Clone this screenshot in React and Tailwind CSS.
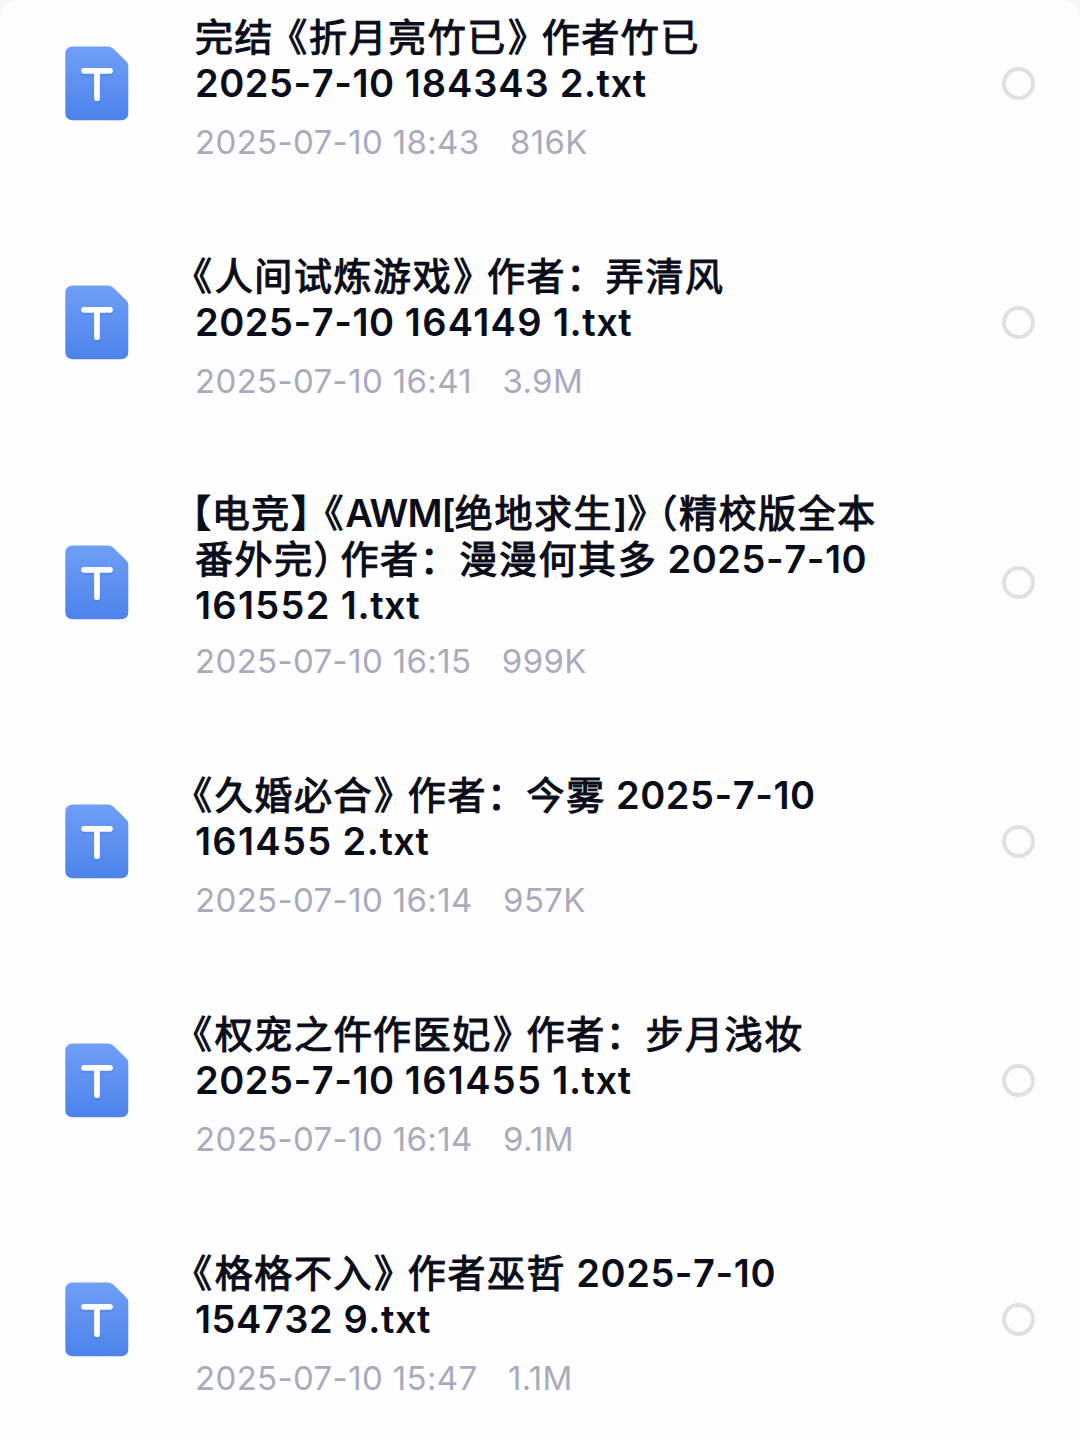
const files = [
  {
    lines: ["完结《折月亮竹已》作者竹已", "2025-7-10 184343 2.txt"],
    time: "2025-07-10 18:43",
    size: "816K",
  },
  {
    lines: ["《人间试炼游戏》作者：弄清风", "2025-7-10 164149 1.txt"],
    time: "2025-07-10 16:41",
    size: "3.9M",
  },
  {
    lines: ["【电竞】《AWM[绝地求生]》（精校版全本", "番外完）作者：漫漫何其多 2025-7-10", "161552 1.txt"],
    time: "2025-07-10 16:15",
    size: "999K",
  },
  {
    lines: ["《久婚必合》作者：今雾 2025-7-10", "161455 2.txt"],
    time: "2025-07-10 16:14",
    size: "957K",
  },
  {
    lines: ["《权宠之仵作医妃》作者：步月浅妆", "2025-7-10 161455 1.txt"],
    time: "2025-07-10 16:14",
    size: "9.1M",
  },
  {
    lines: ["《格格不入》作者巫哲 2025-7-10", "154732 9.txt"],
    time: "2025-07-10 15:47",
    size: "1.1M",
  },
];

// spacing around the half-width punctuation
const punctuation = {
  "《": "ml-[14px] first:-ml-[2px] first:mr-[1px]",
  "》": "ml-[1px] mr-[13px]",
  "【": "-ml-[3px] -mr-[1px]",
  "】": "-mr-[1px]",
  "（": "-ml-[3px]",
  "）": "mr-[6px]",
};

function runStyle(text) {
  if (text in punctuation) {
    return `tracking-[1.7px] font-normal [-webkit-text-stroke:1.1px] [font-feature-settings:'halt'] ${punctuation[text]}`;
  }
  if (/^[A-Z[\]]+$/.test(text)) return "tracking-[-0.9px]";
  if (/^16\d{4}$/.test(text)) return "tracking-[1.3px]";
  if (/^18\d{4}$/.test(text)) return "tracking-[0.9px]";
  if (/^[\x20-\x7e]+$/.test(text)) return "tracking-[0.55px] [font-kerning:none]";
  return "tracking-[1.6px] font-normal [-webkit-text-stroke:1.1px]";
}

function TitleLine({ text }) {
  const runs = text.match(/[《》【】（）]|\d{6}|[\x20-\x7e]+?(?=\d{6}|[^\x20-\x7e]|$)|[^\x20-\x7e《》【】（）]+/g);
  return (
    <span className="block whitespace-pre">
      {runs.map((run, i) => (
        <span key={i} className={runStyle(run)}>{run}</span>
      ))}
    </span>
  );
}

function TextFileIcon() {
  return (
    <svg viewBox="0 0 64 75" className="w-16 h-[75px] shrink-0">
      <defs>
        <linearGradient id="file" x1="0" y1="0" x2="0" y2="1">
          <stop offset="0" stopColor="#6f9ff6" />
          <stop offset="1" stopColor="#4c82ea" />
        </linearGradient>
      </defs>
      <path
        fill="url(#file)"
        d="M8 .5H42.500Q46 .5 48.200 2.600L61.200 15.200Q63.300 17.200 63.300 20.500V67Q63.300 74.300 56 74.300H8Q.3 74.300 .3 67V8Q.3 .5 8 .5Z"
      />
      <path
        d="M19 26.500H45M32 26.500V53.500"
        stroke="#3a6cd0"
        strokeOpacity=".3"
        strokeWidth="6.500"
        strokeLinecap="round"
      />
      <path d="M19 24.800H45M32 24.800V52.200" stroke="#fff" strokeWidth="5.800" strokeLinecap="round" />
    </svg>
  );
}

function FileRow({ file }) {
  const tall = file.lines.length > 2;
  return (
    <li className={`flex items-center pl-[65px] pr-[45px] ${tall ? "h-[281px] -mb-px" : "h-[239px]"}`}>
      <TextFileIcon />
      <div className={`ml-[66px] flex-1 ${tall ? "-mt-px" : "mt-[2px]"}`}>
        <h2 className="text-[38px] leading-[46px] font-semibold text-[#0b0d1a]">
          {file.lines.map((line) => (
            <TitleLine key={line} text={line} />
          ))}
        </h2>
        <p className={`flex gap-[30.5px] text-[33px] leading-[26px] tracking-[0.35px] text-[#a9abbd] ${tall ? "mt-5" : "mt-[23px]"}`}>
          <span>{file.time}</span>
          <span>{file.size}</span>
        </p>
      </div>
      <span className="size-[33px] shrink-0 rounded-full border-4 border-[#dfe0e6]" />
    </li>
  );
}

export default function App() {
  return (
    <main className="h-[1439px] overflow-hidden bg-[#f6f6f8]">
      <div className="h-full overflow-hidden rounded-t-[18px] bg-[#fefefe]">
        <ul
          lang="zh-CN"
          className="-mt-[36.5px] font-['Inter','Noto_Sans_CJK_SC',sans-serif] [text-spacing-trim:space-all]"
        >
          {files.map((file) => (
            <FileRow key={file.lines[0]} file={file} />
          ))}
        </ul>
      </div>
    </main>
  );
}
